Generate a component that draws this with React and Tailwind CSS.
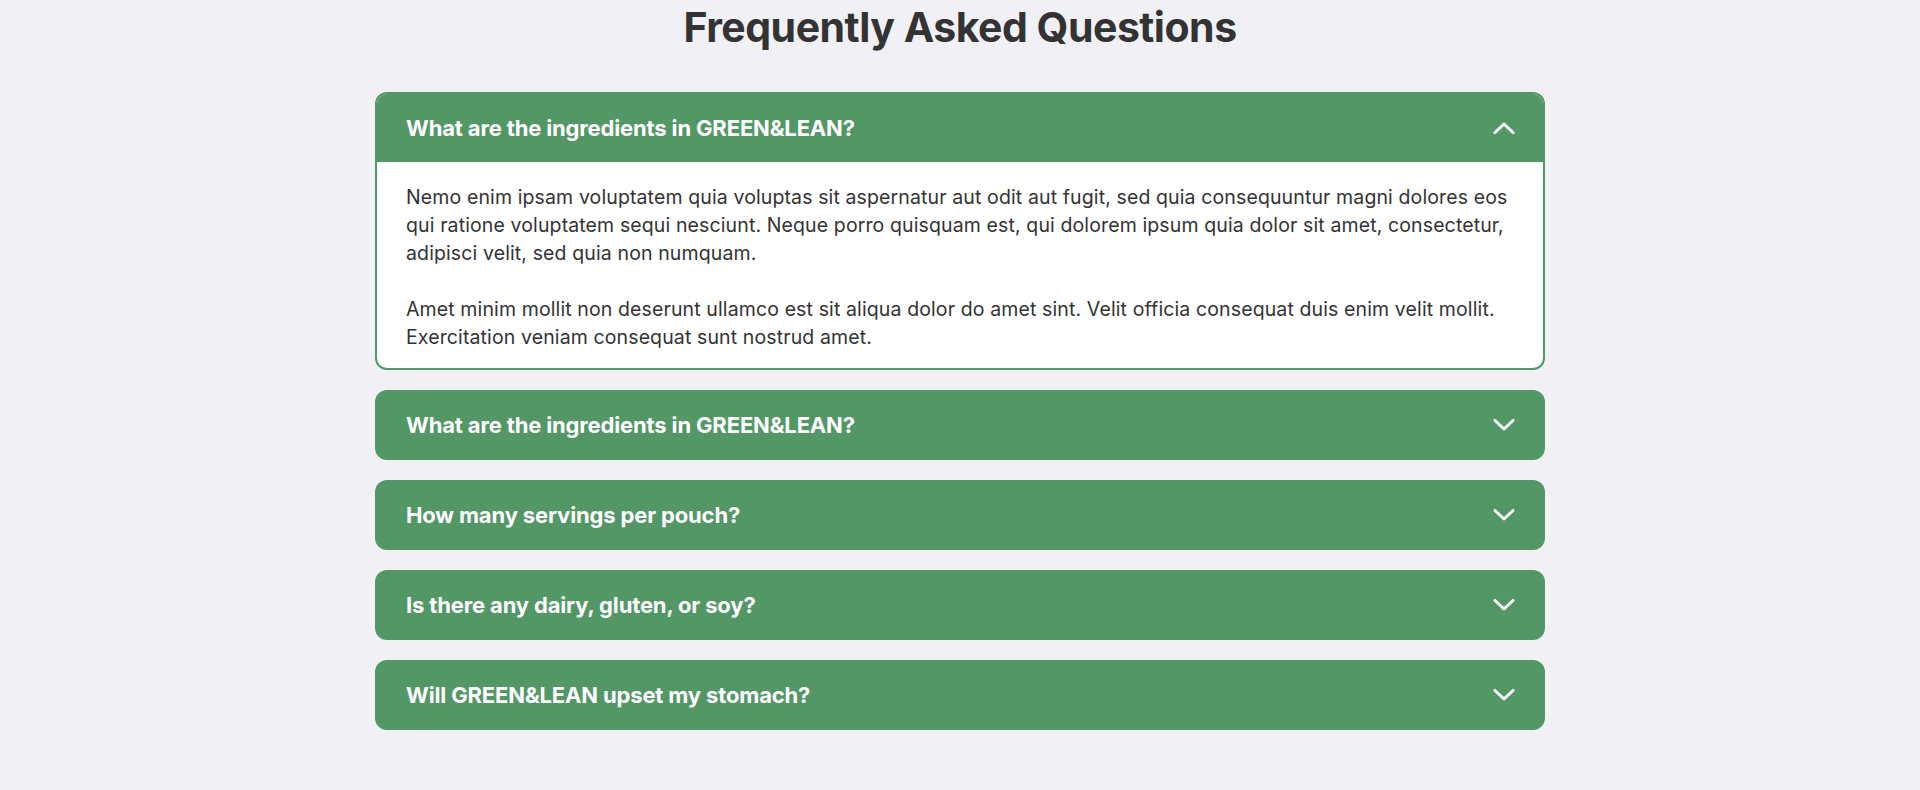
import React, { useState } from "react";

const items = [
  "What are the ingredients in GREEN&LEAN?",
  "What are the ingredients in GREEN&LEAN?",
  "How many servings per pouch?",
  "Is there any dairy, gluten, or soy?",
  "Will GREEN&LEAN upset my stomach?",
];

function Chevron({ up }) {
  return (
    <svg width="22" height="12" viewBox="0 0 22 12" fill="none" className="shrink-0">
      {up ? (
        <path d="M2 10.5 L11 2 L20 10.5" stroke="white" strokeWidth="3" strokeLinecap="round" strokeLinejoin="round" />
      ) : (
        <path d="M2 1.5 L11 10 L20 1.5" stroke="white" strokeWidth="3" strokeLinecap="round" strokeLinejoin="round" />
      )}
    </svg>
  );
}

export default function App() {
  const [open, setOpen] = useState(0);
  return (
    <div
      className="min-h-[790px] w-full bg-[#f0f0f5] flex flex-col items-center"
      style={{ fontFamily: "Inter, 'Noto Sans', sans-serif" }}
    >
      <h1 className="text-[41px] leading-[54px] font-bold text-[#333333] tracking-[-0.5px]">
        Frequently Asked Questions
      </h1>
      <div className="mt-[38px] w-[1170px] flex flex-col gap-[20px]">
        {items.map((q, i) => {
          const isOpen = open === i;
          return (
            <div
              key={i}
              className={
                isOpen
                  ? "rounded-xl border-2 border-[#539767] bg-white overflow-hidden"
                  : "rounded-xl bg-[#539767] overflow-hidden"
              }
            >
              <button
                onClick={() => setOpen(isOpen ? -1 : i)}
                className={
                  isOpen
                    ? "w-full h-[68px] bg-[#539767] flex items-center justify-between pl-[29px] pr-[28px] text-left"
                    : "w-full h-[70px] bg-[#539767] flex items-center justify-between pl-[31px] pr-[30px] text-left"
                }
              >
                <span className="text-white text-[22px] font-bold tracking-[-0.15px]">{q}</span>
                <Chevron up={isOpen} />
              </button>
              {isOpen && (
                <div className="pl-[29px] pr-[20px] pt-[21px] pb-[17px] text-[19.5px] leading-[28px] tracking-[0.12px] text-[#333333] whitespace-nowrap">
                  <p>
                    Nemo enim ipsam voluptatem quia voluptas sit aspernatur aut odit aut fugit, sed quia consequuntur magni dolores eos
                    <br />
                    qui ratione voluptatem sequi nesciunt. Neque porro quisquam est, qui dolorem ipsum quia dolor sit amet, consectetur,
                    <br />
                    adipisci velit, sed quia non numquam.
                  </p>
                  <p className="mt-[28px]">
                    Amet minim mollit non deserunt ullamco est sit aliqua dolor do amet sint. Velit officia consequat duis enim velit mollit.
                    <br />
                    Exercitation veniam consequat sunt nostrud amet.
                  </p>
                </div>
              )}
            </div>
          );
        })}
      </div>
    </div>
  );
}
